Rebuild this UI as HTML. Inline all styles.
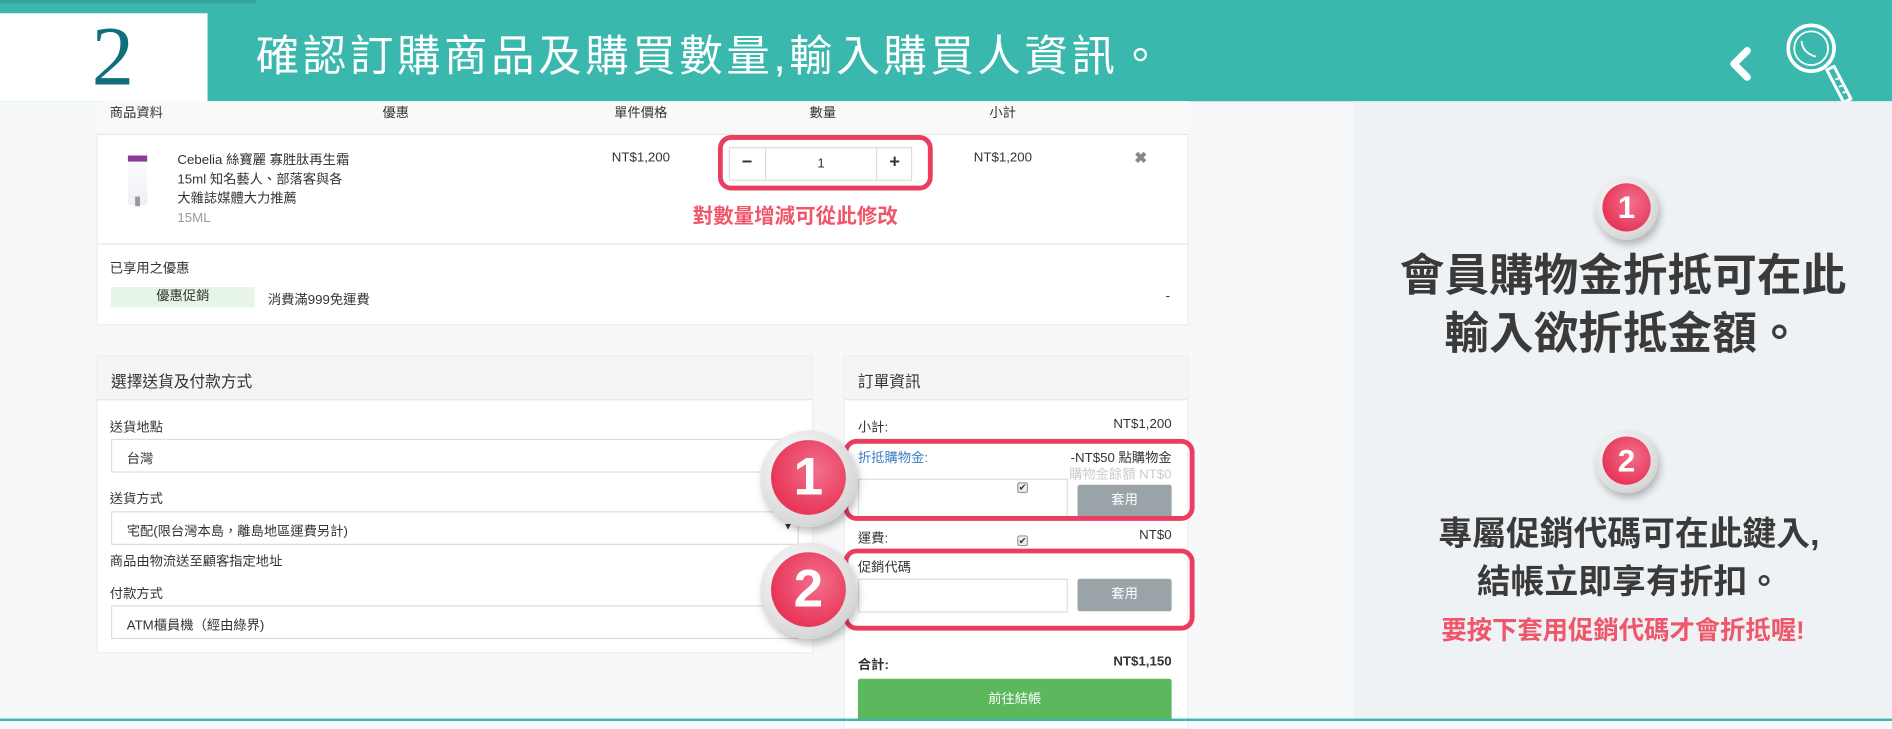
<!DOCTYPE html>
<html><head><meta charset="utf-8"><style>
*{margin:0;padding:0;box-sizing:border-box}
html,body{width:1892px;height:721px;overflow:hidden;background:#f7f8fa}
#w{position:absolute;left:0;top:0;width:1568px;height:598px;transform:scale(1.20663,1.2057);transform-origin:0 0;font-family:"Liberation Sans","Noto Sans CJK TC",sans-serif;font-size:11px;color:#333;background:#f7f8fa}
.a{position:absolute}
.card{position:absolute;background:#fff;border:1px solid #ececec}
.hd{position:absolute;left:0;right:0;top:0;height:36px;background:#f5f5f5;border-bottom:1px solid #e6e6e6;font-size:13px;padding:10px 11px}
.inp{position:absolute;background:#fff;border:1px solid #ddd;height:28px;font-size:11px;padding:7px 12px}
.btn{position:absolute;background:#9aa4a8;color:#fff;border-radius:2px;text-align:center;font-size:11px;line-height:26px}
.red{position:absolute;border:4px solid #ea3d5f;border-radius:11px}
.badge{position:absolute;border-radius:50%;background:radial-gradient(circle at 40% 35%,#fff,#d8d8d8 70%,#bbb);box-shadow:2px 4px 6px rgba(0,0,0,.25)}
.badge i{position:absolute;border-radius:50%;background:radial-gradient(circle at 60% 40%,#f2708a,#e8365a 70%);color:#fff;font-style:normal;font-weight:bold;text-align:center;font-family:"Liberation Sans",sans-serif}
</style></head><body><div id="w">
<div class="a" style="left:0;top:0;width:1568px;height:84px;background:#3bb8ae"></div>
<div class="a" style="left:0;top:0;width:212px;height:3px;background:#35a59c"></div>
<div class="a" style="left:0;top:11px;width:172px;height:73px;background:#fff"></div>
<div class="a" style="left:76px;top:10px;font-family:'Liberation Serif',serif;font-size:70px;color:#0e6f7d;line-height:76px">2</div>
<div class="a" style="left:212px;top:25px;color:#fff;font-size:36px;letter-spacing:3px;line-height:44px;white-space:nowrap">確認訂購商品及購買數量,輸入購買人資訊。</div>
<svg class="a" style="left:1420px;top:6px" width="130" height="84" viewBox="0 0 130 84">
<path d="M28 36 L17 47 L28 58" stroke="#fff" stroke-width="6" fill="none" stroke-linecap="round" stroke-linejoin="round"/>
<circle cx="81" cy="34" r="19" stroke="#fff" stroke-width="3" fill="none"/>
<circle cx="81" cy="34" r="14" stroke="#fff" stroke-width="1.5" fill="none"/>
<path d="M73 28 Q74 38 85 41" stroke="#fff" stroke-width="1.5" fill="none"/>
<path d="M94 52 L100 49 L114 76 L108 79 Z" stroke="#fff" stroke-width="2.5" fill="none" stroke-linejoin="round"/>
<path d="M101 60 L104 59 M104 66 L107 65 M107 71 L110 70" stroke="#fff" stroke-width="1.5"/>
</svg>
<div class="a" style="left:1122px;top:84px;width:446px;height:514px;background:#eef2f4"></div>
<div class="badge" style="left:1322px;top:147px;width:52px;height:52px"><i style="left:6px;top:5px;width:40px;height:40px;font-size:26px;line-height:40px">1</i></div>
<div class="a" style="left:1122px;top:205px;width:446px;text-align:center;font-size:37px;font-weight:bold;color:#3a3a3a;line-height:48px;white-space:nowrap">會員購物金折抵可在此<br>輸入欲折抵金額。</div>
<div class="badge" style="left:1322px;top:357px;width:52px;height:52px"><i style="left:6px;top:5px;width:40px;height:40px;font-size:26px;line-height:40px">2</i></div>
<div class="a" style="left:1122px;top:423px;width:446px;text-align:center;font-size:28px;font-weight:bold;color:#3a3a3a;line-height:40px;padding-left:10px;white-space:nowrap">專屬促銷代碼可在此鍵入,<br>結帳立即享有折扣。</div>
<div class="a" style="left:1122px;top:507px;width:446px;text-align:center;font-size:21px;font-weight:bold;color:#f0566a;white-space:nowrap">要按下套用促銷代碼才會折抵喔!</div>
<div class="card" style="left:80px;top:84px;width:905px;height:186px;border-top:none"></div>
<div class="a" style="left:80px;top:84px;width:905px;height:28px;background:#f9f9f9;border-bottom:1px solid #e6e6e6"></div>
<div class="a" style="left:91px;top:85px">商品資料</div>
<div class="a" style="left:317px;top:85px">優惠</div>
<div class="a" style="left:509px;top:85px">單件價格</div>
<div class="a" style="left:671px;top:85px">數量</div>
<div class="a" style="left:820px;top:85px">小計</div>
<div class="a" style="left:106px;top:125px;width:16px;height:45px;background:linear-gradient(#fff,#f0eef4);border-radius:2px"><div style="height:5px;background:#8a3a9a;margin-top:4px"></div><div style="position:absolute;left:6px;top:38px;width:4px;height:8px;background:#999"></div></div>
<div class="a" style="left:147px;top:125px;line-height:16px">Cebelia 絲寶麗 寡胜肽再生霜<br>15ml 知名藝人、部落客與各<br>大雜誌媒體大力推薦<br><span style="color:#999">15ML</span></div>
<div class="a" style="left:507px;top:125px">NT$1,200</div>
<div class="a" style="left:604px;top:122px;width:152px;height:28px;border:1px solid #ddd;background:#fff"></div>
<div class="a" style="left:604px;top:122px;width:31px;height:28px;border-right:1px solid #ddd;text-align:center;font-weight:bold;font-size:15px;line-height:26px">−</div>
<div class="a" style="left:726px;top:122px;width:30px;height:28px;border-left:1px solid #ddd;text-align:center;font-weight:bold;font-size:15px;line-height:26px">+</div>
<div class="a" style="left:635px;top:130px;width:91px;text-align:center">1</div>
<div class="red" style="left:595px;top:112px;width:178px;height:46px"></div>
<div class="a" style="left:574px;top:165px;font-size:17px;font-weight:bold;color:#f0566a">對數量增減可從此修改</div>
<div class="a" style="left:807px;top:125px">NT$1,200</div>
<div class="a" style="left:940px;top:123px;color:#888;font-size:13px;font-weight:bold">✖</div>
<div class="a" style="left:80px;top:202px;width:905px;border-top:1px solid #e6e6e6"></div>
<div class="a" style="left:91px;top:214px">已享用之優惠</div>
<div class="a" style="left:92px;top:238px;width:119px;height:17px;background:#e6f5e6;text-align:center;line-height:17px">優惠促銷</div>
<div class="a" style="left:222px;top:240px">消費滿999免運費</div>
<div class="a" style="left:966px;top:240px">-</div>
<div class="card" style="left:80px;top:295px;width:594px;height:247px"><div class="hd">選擇送貨及付款方式</div></div>
<div class="a" style="left:91px;top:346px">送貨地點</div>
<div class="inp" style="left:92px;top:364px;width:570px">台灣</div>
<div class="a" style="left:91px;top:405px">送貨方式</div>
<div class="inp" style="left:92px;top:424px;width:570px">宅配(限台灣本島，離島地區運費另計)<span style="position:absolute;right:4px;top:7px;font-size:8px">▼</span></div>
<div class="a" style="left:91px;top:457px">商品由物流送至顧客指定地址</div>
<div class="a" style="left:91px;top:484px">付款方式</div>
<div class="inp" style="left:92px;top:502px;width:570px">ATM櫃員機（經由綠界)</div>
<div class="card" style="left:699px;top:295px;width:286px;height:310px"><div class="hd">訂單資訊</div></div>
<div class="a" style="left:711px;top:346px">小計:</div>
<div class="a" style="right:597px;top:346px">NT$1,200</div>
<div class="a" style="left:711px;top:371px;color:#3a7fbf">折抵購物金:</div>
<div class="a" style="right:597px;top:371px">-NT$50 點購物金</div>
<div class="a" style="right:597px;top:385px;color:#ccc">購物金餘額 NT$0</div>
<div class="inp" style="left:711px;top:397px;width:174px;height:32px"></div>
<div class="a" style="left:843px;top:400px;width:9px;height:9px;border:1px solid #999;border-radius:2px;font-size:8px;line-height:7px;text-align:center;background:#eee">✔</div>
<div class="btn" style="left:893px;top:402px;width:78px;height:27px">套用</div>
<div class="red" style="left:699px;top:364px;width:291px;height:68px"></div>
<div class="a" style="left:711px;top:438px">運費:</div>
<div class="a" style="right:597px;top:438px">NT$0</div>
<div class="a" style="left:843px;top:444px;width:9px;height:9px;border:1px solid #999;border-radius:2px;font-size:8px;line-height:7px;text-align:center;background:#eee">✔</div>
<div class="a" style="left:711px;top:462px">促銷代碼</div>
<div class="inp" style="left:711px;top:480px;width:174px;height:28px"></div>
<div class="btn" style="left:893px;top:480px;width:78px;height:27px">套用</div>
<div class="red" style="left:699px;top:455px;width:291px;height:68px"></div>
<div class="a" style="left:711px;top:543px;font-weight:bold">合計:</div>
<div class="a" style="right:597px;top:543px;font-weight:bold">NT$1,150</div>
<div class="a" style="left:711px;top:563px;width:260px;height:35px;background:#5cb85c;color:#fff;text-align:center;line-height:35px;border-radius:2px">前往結帳</div>
<div class="badge" style="left:630px;top:357px;width:80px;height:80px"><i style="left:9px;top:8px;width:62px;height:62px;font-size:44px;line-height:62px">1</i></div>
<div class="badge" style="left:630px;top:450px;width:80px;height:80px"><i style="left:9px;top:8px;width:62px;height:62px;font-size:44px;line-height:62px">2</i></div>
<div class="a" style="left:0;top:596px;width:1568px;height:2px;background:#3bb8ae"></div>
</div></body></html>
